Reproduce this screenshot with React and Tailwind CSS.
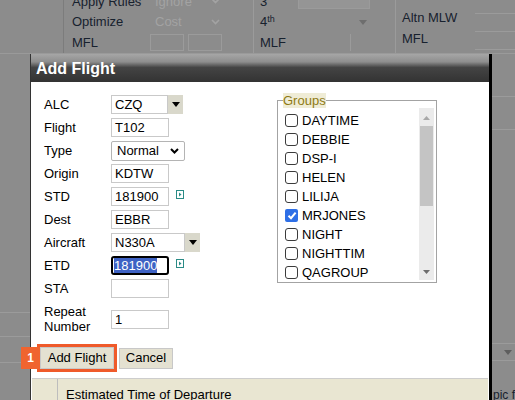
import React from 'react'

const groups = [
    { name: 'DAYTIME', checked: false },
    { name: 'DEBBIE', checked: false },
    { name: 'DSP-I', checked: false },
    { name: 'HELEN', checked: false },
    { name: 'LILIJA', checked: false },
    { name: 'MRJONES', checked: true },
    { name: 'NIGHT', checked: false },
    { name: 'NIGHTTIM', checked: false },
    { name: 'QAGROUP', checked: false },
]

function DownTriangle({ color = '#000' }) {
    return (
        <svg width="8" height="5" viewBox="0 0 8 5">
            <path d="M0 0 L8 0 L4 5 Z" fill={color} />
        </svg>
    )
}

function PickIcon() {
    // little teal "open picker" square next to time fields
    return (
        <svg width="8" height="9" viewBox="0 0 8 9" className="ml-[7px] -mt-[4px]">
            <rect x="0.5" y="0.5" width="7" height="8" fill="#fff" stroke="#2a8b86" />
            <path d="M3 2.5 L5.5 4.5 L3 6.5 Z" fill="#2a8b86" />
        </svg>
    )
}

function TextBox({ value, className = 'w-[58px]' }) {
    return (
        <div className={`h-[19px] ${className} border border-[#c9c9c9] bg-white pl-[3px] text-[13px] leading-[17px] text-black`}>
            {value}
        </div>
    )
}

function Combo({ value, className }) {
    return (
        <div className="flex h-[19px]">
            <div className={`h-[19px] ${className} border border-[#c9c9c9] bg-white pl-[3px] text-[13px] leading-[17px] text-black`}>
                {value}
            </div>
            <div className="flex h-[19px] w-[15px] items-center justify-center bg-[#d9d8cb]">
                <DownTriangle />
            </div>
        </div>
    )
}

function Check({ checked }) {
    if (checked) {
        return (
            <span className="flex h-[13px] w-[13px] items-center justify-center rounded-[2px] bg-[#2e6fe6]">
                <svg width="10" height="9" viewBox="0 0 10 9">
                    <path d="M1.5 4.8 L4 7.2 L8.6 1.6" fill="none" stroke="#fff" strokeWidth="2" />
                </svg>
            </span>
        )
    }
    return <span className="h-[13px] w-[13px] rounded-[3px] border border-[#3b3b3b] bg-white" />
}

function Row({ label, children }) {
    return (
        <div className="flex h-[23px] items-center">
            <div className="w-[67px] text-[13px] text-black">{label}</div>
            {children}
        </div>
    )
}

function BackgroundPage() {
    return (
        <div className="flex h-full w-full flex-col text-[13px] text-[#17212e]">
            <div className="flex h-[54px] shrink-0 border-b border-[#9a9a9a]">
                <div className="w-[64px] shrink-0 border-r border-[#7c7c7c]" />
                <div className="-mt-[9px] flex w-[189px] shrink-0 flex-col pl-[8px]">
                    <div className="flex h-[21px] items-center">
                        <span className="w-[78px]">Apply Rules</span>
                        <span className="flex w-[75px] items-center justify-between px-[5px] text-[#a3a3a3]">
                            Ignore
                            <svg width="9" height="6" viewBox="0 0 9 6"><path d="M1 1 L4.5 4.5 L8 1" fill="none" stroke="#a3a3a3" strokeWidth="1.6" /></svg>
                        </span>
                    </div>
                    <div className="flex h-[21px] items-center">
                        <span className="w-[78px]">Optimize</span>
                        <span className="flex w-[75px] items-center justify-between px-[5px] text-[#a3a3a3]">
                            Cost
                            <svg width="9" height="6" viewBox="0 0 9 6"><path d="M1 1 L4.5 4.5 L8 1" fill="none" stroke="#a3a3a3" strokeWidth="1.6" /></svg>
                        </span>
                    </div>
                    <div className="flex h-[21px] items-center">
                        <span className="w-[78px]">MFL</span>
                        <span className="h-[17px] w-[34px] border border-[#9b9b9b]" />
                        <span className="ml-[4px] h-[17px] w-[34px] border border-[#9b9b9b]" />
                    </div>
                </div>
                <div className="-mt-[9px] flex w-[142px] shrink-0 flex-col border-l border-[#9b9b9b] pl-[6px]">
                    <div className="flex h-[21px] items-center">
                        <span className="w-[38px]">3</span>
                        <span className="h-[15px] w-[72px] border border-[#9b9b9b] bg-[#959595]" />
                    </div>
                    <div className="flex h-[21px] items-center">
                        <span className="w-[38px]">4<sup className="text-[9px]">th</sup></span>
                        <span className="flex h-[15px] w-[72px] items-center justify-end pr-[3px]">
                            <DownTriangle color="#6e6e6e" />
                        </span>
                    </div>
                    <div className="flex h-[21px] items-center">
                        <span className="w-[90px]">MLF</span>
                        <span className="h-[17px] w-[20px] border-l border-[#9b9b9b]" />
                    </div>
                </div>
                <div className="flex w-[75px] shrink-0 flex-col border-l border-[#9b9b9b] pl-[6px] pt-[7px]">
                    <div className="flex h-[21px] items-center">Altn MLW</div>
                    <div className="flex h-[21px] items-center">MFL</div>
                </div>
                <div className="flex flex-1 flex-col gap-[3px] pl-[5px] pt-[2px]">
                    <div className="h-[12px] border-b border-[#9b9b9b]" />
                    <div className="h-[15px] border-b border-[#9b9b9b]" />
                    <div className="h-[15px] border-b border-[#9b9b9b]" />
                </div>
            </div>
            <div className="flex flex-1">
                <div className="flex w-[30px] shrink-0 flex-col">
                    <div className="h-[258px]" />
                    <div className="h-[24px] border-t border-[#9b9b9b]" />
                    <div className="h-[26px] border-t border-[#9b9b9b]" />
                    <div className="h-[24px] border-t border-[#9b9b9b]" />
                </div>
                <div className="flex-1" />
                <div className="flex w-[23px] shrink-0 flex-col overflow-hidden">
                    <div className="h-[43px] border-b border-[#9b9b9b]" />
                    <div className="h-[33px] border-b border-[#9b9b9b]" />
                    <div className="h-[214px] border-b border-[#9b9b9b]" />
                    <div className="flex h-[17px] items-center justify-end border-b border-[#9b9b9b] pr-[3px]">
                        <DownTriangle color="#5e5e5e" />
                    </div>
                    <div className="flex-1 whitespace-nowrap pl-[1px] pt-[28px] text-[12px] leading-[12px]">pic f</div>
                </div>
            </div>
        </div>
    )
}

function GroupsBox() {
    return (
        <fieldset className="mt-[11px] h-[190px] w-[160px] border border-[#a3a3a3]">
            <legend className="ml-[5px] bg-[#efecd6] text-[13px] leading-[15px] text-[#8e7a12]">Groups</legend>
            <div className="flex">
                <div className="flex flex-1 flex-col pl-[7px] pt-[3px]">
                    {groups.map((g) => (
                        <div key={g.name} className="flex h-[19px] items-center">
                            <Check checked={g.checked} />
                            <span className="ml-[4px] text-[13px] text-black">{g.name}</span>
                        </div>
                    ))}
                </div>
                <div className="mr-[2px] flex h-[172px] w-[15px] flex-col items-center bg-[#ebebeb]">
                    <svg width="7" height="4" viewBox="0 0 7 4" className="mt-[8px]"><path d="M0 4 L7 4 L3.5 0 Z" fill="#a8a8a8" /></svg>
                    <div className="mt-[6px] h-[80px] w-[13px] bg-[#c4c4c4]" />
                    <div className="flex-1" />
                    <svg width="7" height="4" viewBox="0 0 7 4" className="mb-[6px]"><path d="M0 0 L7 0 L3.5 4 Z" fill="#6e6e6e" /></svg>
                </div>
            </div>
        </fieldset>
    )
}

export default function App() {
    return (
        <div className="relative h-[400px] w-[515px] overflow-hidden bg-[#8c8c8c] font-['Liberation_Sans',Arial,sans-serif]">
            <BackgroundPage />

            {/* modal dialog over the dimmed page */}
            <div className="absolute left-[30px] top-[54px] flex h-[360px] w-[462px] flex-col border-l border-r-[3px] border-l-[#333] border-r-black bg-white">
                <div className="flex h-[28px] items-center bg-[linear-gradient(to_bottom,#a6a6a6_0%,#8e8e8e_28%,#444_48%,#333_100%)] pl-[5px] pt-[1px]">
                    <span className="text-[16px] font-bold text-white">Add Flight</span>
                </div>

                <div className="flex">
                    <div className="flex w-[246px] flex-col pl-[13px] pt-[11px]">
                        <Row label="ALC"><Combo value="CZQ" className="w-[57px]" /></Row>
                        <Row label="Flight"><TextBox value="T102" /></Row>
                        <Row label="Type">
                            <div className="flex h-[20px] w-[74px] items-center justify-between rounded-[2px] border border-[#b4b4b4] bg-white pl-[5px] pr-[5px] text-[13px] text-black">
                                Normal
                                <svg width="9" height="6" viewBox="0 0 9 6"><path d="M1 1 L4.5 4.5 L8 1" fill="none" stroke="#000" strokeWidth="2" /></svg>
                            </div>
                        </Row>
                        <Row label="Origin"><TextBox value="KDTW" /></Row>
                        <Row label="STD"><TextBox value="181900" /><PickIcon /></Row>
                        <Row label="Dest"><TextBox value="EBBR" /></Row>
                        <Row label="Aircraft"><Combo value="N330A" className="w-[74px]" /></Row>
                        <Row label="ETD">
                            <div className="flex h-[19px] w-[58px] items-center overflow-hidden rounded-[3px] border-2 border-black bg-white pl-[1px]">
                                <span className="bg-[#3e62c4] text-[13px] leading-[15px] text-white">181900</span>
                            </div>
                            <PickIcon />
                        </Row>
                        <Row label="STA"><TextBox value="" /></Row>
                        <div className="flex h-[38px] items-center">
                            <div className="w-[67px] text-[13px] leading-[15px] text-black">Repeat<br />Number</div>
                            <TextBox value="1" />
                        </div>
                    </div>
                    <GroupsBox />
                </div>

                <div className="mt-[6px] flex items-center pl-[6px]">
                    <div className="relative h-[28px] border-[3px] border-[#ef5a2a]">
                        <div className="absolute right-full top-0 flex h-[22px] w-[19px] items-center justify-center bg-[#f0642f] text-[12px] font-bold text-white">1</div>
                        <div className="flex h-[22px] w-[74px] items-center justify-center border border-[#c8c8c8] bg-[#e4e1d1] text-[13px] text-black">Add Flight</div>
                    </div>
                    <div className="ml-[2px] flex h-[21px] w-[54px] items-center justify-center border border-[#c8c8c8] bg-[#e4e1d1] text-[13px] text-black">Cancel</div>
                </div>

                <div className="mx-[1px] mt-[6px] flex flex-1 border-t border-[#cdcdcd] bg-[#e9e6d2]">
                    <div className="w-[26px] border-r border-[#bdbdbd]" />
                    <div className="pl-[8px] pt-[6px] text-[13px] text-black">Estimated Time of Departure</div>
                </div>
            </div>
        </div>
    )
}
